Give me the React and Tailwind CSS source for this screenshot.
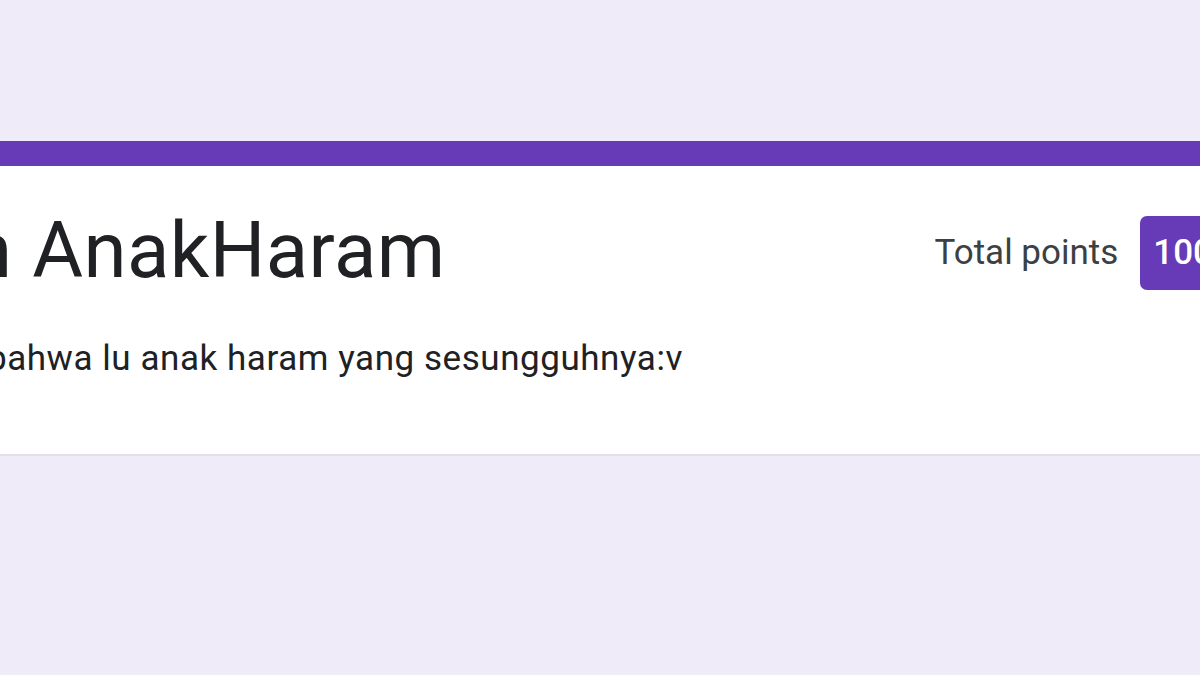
export default function App() {
    return (
        <div className="min-h-[675px] w-full overflow-hidden bg-[#f0ebf8] pt-[141px] font-['Roboto',sans-serif]">
            {/* Form header card */}
            <div className="w-full overflow-hidden bg-white border-b-2 border-[#e2e0e6]">
                <div className="h-[25px] bg-[#673ab7]"></div>
                <div className="flex justify-between items-start pt-[46px] pb-[78px]">
                    <div className="flex flex-col gap-[52px] min-w-0">
                        <h1 className="-ml-[31px] whitespace-nowrap text-[78px] leading-[78px] tracking-[0.4px] font-normal text-[#202124]">
                            n AnakHaram
                        </h1>
                        <p className="-ml-[13px] whitespace-nowrap text-[35px] leading-[34px] tracking-[0.55px] text-[#202124]">
                            bahwa lu anak haram yang sesungguhnya:v
                        </p>
                    </div>
                    <div className="flex items-center gap-[22px] mt-[4px] -mr-[26px] shrink-0">
                        <span className="text-[35px] text-[#3c4043]">Total points</span>
                        <span className="flex items-center h-[74px] px-[13px] rounded-[7px] bg-[#673ab7] text-white text-[35px] font-medium">
                            100
                        </span>
                    </div>
                </div>
            </div>
        </div>
    );
}
